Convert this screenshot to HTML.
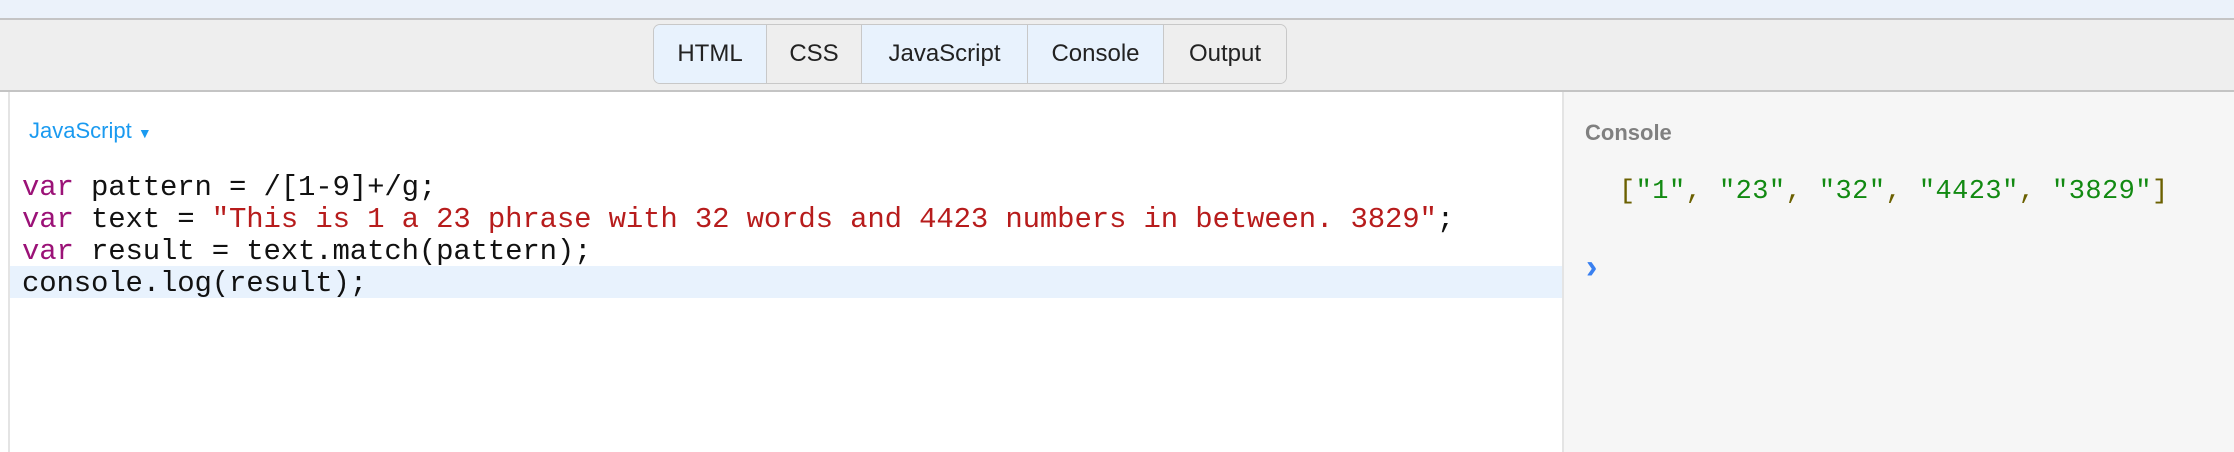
<!DOCTYPE html>
<html><head><style>
body{margin:0;width:2234px;height:452px;overflow:hidden;background:#fff;font-family:"Liberation Sans",sans-serif;position:relative}
.top{position:absolute;left:0;top:0;width:2234px;height:18px;background:#ebf2fa;border-bottom:2px solid #c4c4c4}
.bar{position:absolute;left:0;top:20px;width:2234px;height:70px;background:#eeeeee;border-bottom:2px solid #c4c4c4}
.tabs{position:absolute;left:653px;top:25px;width:632px;height:58px;border:1px solid #c8c8c8;border-radius:7px;overflow:hidden;display:flex}
.tabs div{height:58px;line-height:58px;text-align:center;font-size:24px;color:#222;border-right:1px solid #c8c8c8;box-sizing:border-box}
.tabs .on{background:#e8f2fd}
.tabs .off{background:#eeeeee}
.ed{position:absolute;left:8px;top:92px;width:1554px;height:360px;border-left:2px solid #e4e4e4;background:#fff}
.con{position:absolute;left:1562px;top:92px;width:672px;height:360px;background:#f6f6f6;border-left:2px solid #e4e4e4}
.lang{position:absolute;left:29px;top:118px;font-size:22px;color:#1a9af0}
.code{position:absolute;left:22px;top:172px;font-family:"Liberation Mono",monospace;font-size:29px;letter-spacing:-0.15px;line-height:32px;white-space:pre;color:#111}
.hl{position:absolute;left:10px;top:266px;width:1552px;height:32px;background:#e8f2fd}
.k{color:#9b1277}.s{color:#b71c1c}
.ct{position:absolute;left:1585px;top:120px;font-size:22px;font-weight:bold;color:#808080}
.arr{position:absolute;left:1619px;top:177px;font-family:"Liberation Mono",monospace;font-size:27px;letter-spacing:0.45px;white-space:pre;color:#6b6000}
.g{color:#128a12}
.chev{position:absolute;left:1586px;top:248px;font-size:34px;font-weight:bold;color:#3a80f0}
</style></head><body>
<div class="top"></div>
<div class="bar"><div class="tabs" style="top:4px">
<div class="on" style="width:113px">HTML</div>
<div class="off" style="width:95px">CSS</div>
<div class="on" style="width:166px">JavaScript</div>
<div class="on" style="width:136px">Console</div>
<div class="off" style="width:122px;border-right:0">Output</div>
</div></div>
<div class="ed"></div>
<div class="hl"></div>
<div class="lang">JavaScript <span style="font-size:14px">▼</span></div>
<div class="code"><span class="k">var</span> pattern = /[1-9]+/g;
<span class="k">var</span> text = <span class="s">"This is 1 a 23 phrase with 32 words and 4423 numbers in between. 3829"</span>;
<span class="k">var</span> result = text.match(pattern);
console.log(result);</div>
<div class="con"></div>
<div class="ct">Console</div>
<div class="arr">[<span class="g">"1"</span>, <span class="g">"23"</span>, <span class="g">"32"</span>, <span class="g">"4423"</span>, <span class="g">"3829"</span>]</div>
<div class="chev">›</div>
</body></html>
